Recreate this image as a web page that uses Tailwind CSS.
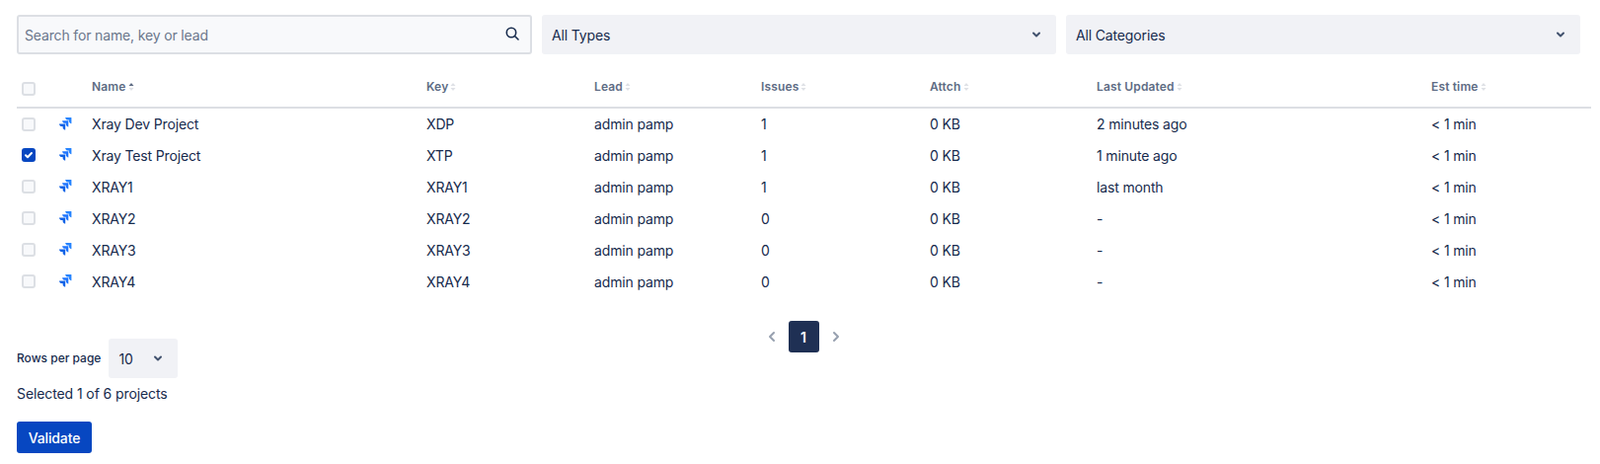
<!DOCTYPE html>
<html lang="en">
<head>
    <meta charset="UTF-8">
    <title>Projects</title>
    <script src="https://cdn.jsdelivr.net/npm/@tailwindcss/browser@4"></script>
</head>
<body class="bg-white font-['Inter',sans-serif] text-[14px] tracking-[-0.15px] text-[#172b4d]">
    <svg class="hidden">
        <symbol id="jira" viewBox="0 0 16 16">
            <path fill="#2684ff" d="M15 1H9.2c0 1.5 1.2 2.6 2.6 2.6h1v1c0 1.4 1.2 2.6 2.6 2.6V1.400C15.400 1.200 15.200 1 15 1z"/>
            <path fill="#1f75fe" d="M11.800 4.200H6.100c0 1.500 1.200 2.600 2.600 2.600h1v1c0 1.400 1.200 2.600 2.600 2.600V4.600c0-.2-.2-.4-.5-.4z"/>
            <path fill="#0f62e6" d="M8.700 7.400H3c0 1.500 1.200 2.600 2.600 2.600h1v1c0 1.400 1.200 2.600 2.600 2.600V7.800c0-.2-.2-.4-.5-.4z"/>
        </symbol>
        <symbol id="sort" viewBox="0 0 6 10">
            <path fill="currentColor" d="M3 1 5.500 4h-5z"/>
            <path fill="#dfe1e6" d="M3 9 .5 6h5z"/>
        </symbol>
        <symbol id="chevron" viewBox="0 0 12 12">
            <path fill="none" stroke="currentColor" stroke-width="2" stroke-linecap="round" stroke-linejoin="round" d="M3 4.500 6 7.500l3-3"/>
        </symbol>
    </svg>

    <div class="pl-[17px] pr-[9px] pt-[15px]">
        <!-- filters -->
        <div class="grid grid-cols-[522px_521px_521px] gap-x-[10px]">
            <div class="h-[40px] flex items-center justify-between pl-[6px] pr-[10px] bg-[#f8f9fb] border-2 border-[#dcdfe4] rounded-[3px]">
                <span class="text-[#6b778c]">Search for name, key or lead</span>
                <svg class="w-[16px] h-[16px] text-[#172b4d] -translate-y-[1px]" viewBox="0 0 16 16" fill="none" stroke="currentColor" stroke-width="1.600" stroke-linecap="round"><circle cx="7" cy="7" r="4.700"/><path d="m10.500 10.500 3.500 3.500"/></svg>
            </div>
            <div class="h-[40px] flex items-center justify-between pl-[10px] pr-[14px] bg-[#f1f2f6] rounded-[3px]">
                <span>All Types</span>
                <svg class="w-[12px] h-[12px] text-[#42526e]"><use href="#chevron"/></svg>
            </div>
            <div class="h-[40px] flex items-center justify-between pl-[10px] pr-[14px] bg-[#f1f2f6] rounded-[3px]">
                <span>All Categories</span>
                <svg class="w-[12px] h-[12px] text-[#42526e]"><use href="#chevron"/></svg>
            </div>
        </div>

        <!-- table -->
        <table class="mt-[12px] w-[1595px] table-fixed border-collapse">
            <colgroup>
                <col class="w-[40px]"><col class="w-[36px]"><col class="w-[339px]"><col class="w-[170px]"><col class="w-[169px]"><col class="w-[171px]"><col class="w-[169px]"><col class="w-[339px]"><col>
            </colgroup>
            <thead>
                <tr class="h-[42px] border-b-2 border-[#dcdfe4] text-left text-[12px] tracking-[0.15px] text-[#5e6c84]">
                    <th class="pl-[5px]"><span class="block w-[14px] h-[14px] mt-[5px] bg-[#f8f9fb] border-2 border-[#dcdfe4] rounded-[3px]"></span></th>
                    <th></th>
                    <th class="font-semibold"><span class="inline-flex items-center gap-[2px]">Name<svg class="w-[6px] h-[10px] text-[#5e6c84]"><use href="#sort"/></svg></span></th>
                    <th class="font-semibold"><span class="inline-flex items-center gap-[2px]">Key<svg class="w-[6px] h-[10px] text-[#dfe1e6]"><use href="#sort"/></svg></span></th>
                    <th class="font-semibold"><span class="inline-flex items-center gap-[2px]">Lead<svg class="w-[6px] h-[10px] text-[#dfe1e6]"><use href="#sort"/></svg></span></th>
                    <th class="font-semibold"><span class="inline-flex items-center gap-[2px]">Issues<svg class="w-[6px] h-[10px] text-[#dfe1e6]"><use href="#sort"/></svg></span></th>
                    <th class="font-semibold"><span class="inline-flex items-center gap-[2px]">Attch<svg class="w-[6px] h-[10px] text-[#dfe1e6]"><use href="#sort"/></svg></span></th>
                    <th class="font-semibold"><span class="inline-flex items-center gap-[2px]">Last Updated<svg class="w-[6px] h-[10px] text-[#dfe1e6]"><use href="#sort"/></svg></span></th>
                    <th class="font-semibold"><span class="inline-flex items-center gap-[2px]">Est time<svg class="w-[6px] h-[10px] text-[#dfe1e6]"><use href="#sort"/></svg></span></th>
                </tr>
            </thead>
            <tbody id="rows">
                <tr class="h-[32px]">
                    <td class="pl-[5px]"><span class="block w-[14px] h-[14px] bg-[#f8f9fb] border-2 border-[#dcdfe4] rounded-[3px]"></span></td>
                    <td><svg class="w-[16px] h-[16px]"><use href="#jira"/></svg></td>
                    <td>Xray Dev Project</td><td>XDP</td><td>admin pamp</td><td>1</td><td>0 KB</td><td>2 minutes ago</td><td>&lt; 1 min</td>
                </tr>
                <tr class="h-[32px]">
                    <td class="pl-[5px]"><span class="flex items-center justify-center w-[14px] h-[14px] bg-[#0747c1] rounded-[3px]"><svg class="w-[10px] h-[10px]" viewBox="0 0 10 10" fill="none" stroke="#fff" stroke-width="2" stroke-linecap="round" stroke-linejoin="round"><path d="m2 5.200 2 2 4-4.200"/></svg></span></td>
                    <td><svg class="w-[16px] h-[16px]"><use href="#jira"/></svg></td>
                    <td>Xray Test Project</td><td>XTP</td><td>admin pamp</td><td>1</td><td>0 KB</td><td>1 minute ago</td><td>&lt; 1 min</td>
                </tr>
                <tr class="h-[32px]">
                    <td class="pl-[5px]"><span class="block w-[14px] h-[14px] bg-[#f8f9fb] border-2 border-[#dcdfe4] rounded-[3px]"></span></td>
                    <td><svg class="w-[16px] h-[16px]"><use href="#jira"/></svg></td>
                    <td>XRAY1</td><td>XRAY1</td><td>admin pamp</td><td>1</td><td>0 KB</td><td>last month</td><td>&lt; 1 min</td>
                </tr>
                <tr class="h-[32px]">
                    <td class="pl-[5px]"><span class="block w-[14px] h-[14px] bg-[#f8f9fb] border-2 border-[#dcdfe4] rounded-[3px]"></span></td>
                    <td><svg class="w-[16px] h-[16px]"><use href="#jira"/></svg></td>
                    <td>XRAY2</td><td>XRAY2</td><td>admin pamp</td><td>0</td><td>0 KB</td><td>-</td><td>&lt; 1 min</td>
                </tr>
                <tr class="h-[32px]">
                    <td class="pl-[5px]"><span class="block w-[14px] h-[14px] bg-[#f8f9fb] border-2 border-[#dcdfe4] rounded-[3px]"></span></td>
                    <td><svg class="w-[16px] h-[16px]"><use href="#jira"/></svg></td>
                    <td>XRAY3</td><td>XRAY3</td><td>admin pamp</td><td>0</td><td>0 KB</td><td>-</td><td>&lt; 1 min</td>
                </tr>
                <tr class="h-[32px]">
                    <td class="pl-[5px]"><span class="block w-[14px] h-[14px] bg-[#f8f9fb] border-2 border-[#dcdfe4] rounded-[3px]"></span></td>
                    <td><svg class="w-[16px] h-[16px]"><use href="#jira"/></svg></td>
                    <td>XRAY4</td><td>XRAY4</td><td>admin pamp</td><td>0</td><td>0 KB</td><td>-</td><td>&lt; 1 min</td>
                </tr>
            </tbody>
        </table>

        <!-- pagination -->
        <div class="mt-[24px] h-[32px] flex items-center justify-center gap-[10px] w-[1594px]">
            <svg class="w-[14px] h-[14px] text-[#97a0af]" viewBox="0 0 14 14" fill="none" stroke="currentColor" stroke-width="2" stroke-linecap="round" stroke-linejoin="round"><path d="M9 3 5 7l4 4"/></svg>
            <span class="w-[31px] h-[32px] flex items-center justify-center bg-[#1f3054] text-white font-semibold rounded-[3px]">1</span>
            <svg class="w-[14px] h-[14px] text-[#97a0af]" viewBox="0 0 14 14" fill="none" stroke="currentColor" stroke-width="2" stroke-linecap="round" stroke-linejoin="round"><path d="m5 3 4 4-4 4"/></svg>
        </div>

        <div class="mt-[-14px] flex items-center gap-[8px]">
            <span class="text-[12px] font-medium tracking-normal">Rows per page</span>
            <div class="w-[70px] h-[40px] flex items-center justify-between pl-[10px] pr-[14px] bg-[#f1f2f6] rounded-[3px]">
                <span>10</span>
                <svg class="w-[12px] h-[12px] text-[#42526e]"><use href="#chevron"/></svg>
            </div>
        </div>
        <p class="mt-[6px] leading-[20px] tracking-[-0.1px]">Selected 1 of 6 projects</p>
        <button class="block mt-[18px] w-[76px] h-[32px] bg-[#0747c1] text-white font-medium rounded-[3px]">Validate</button>
    </div>
</body>
</html>
